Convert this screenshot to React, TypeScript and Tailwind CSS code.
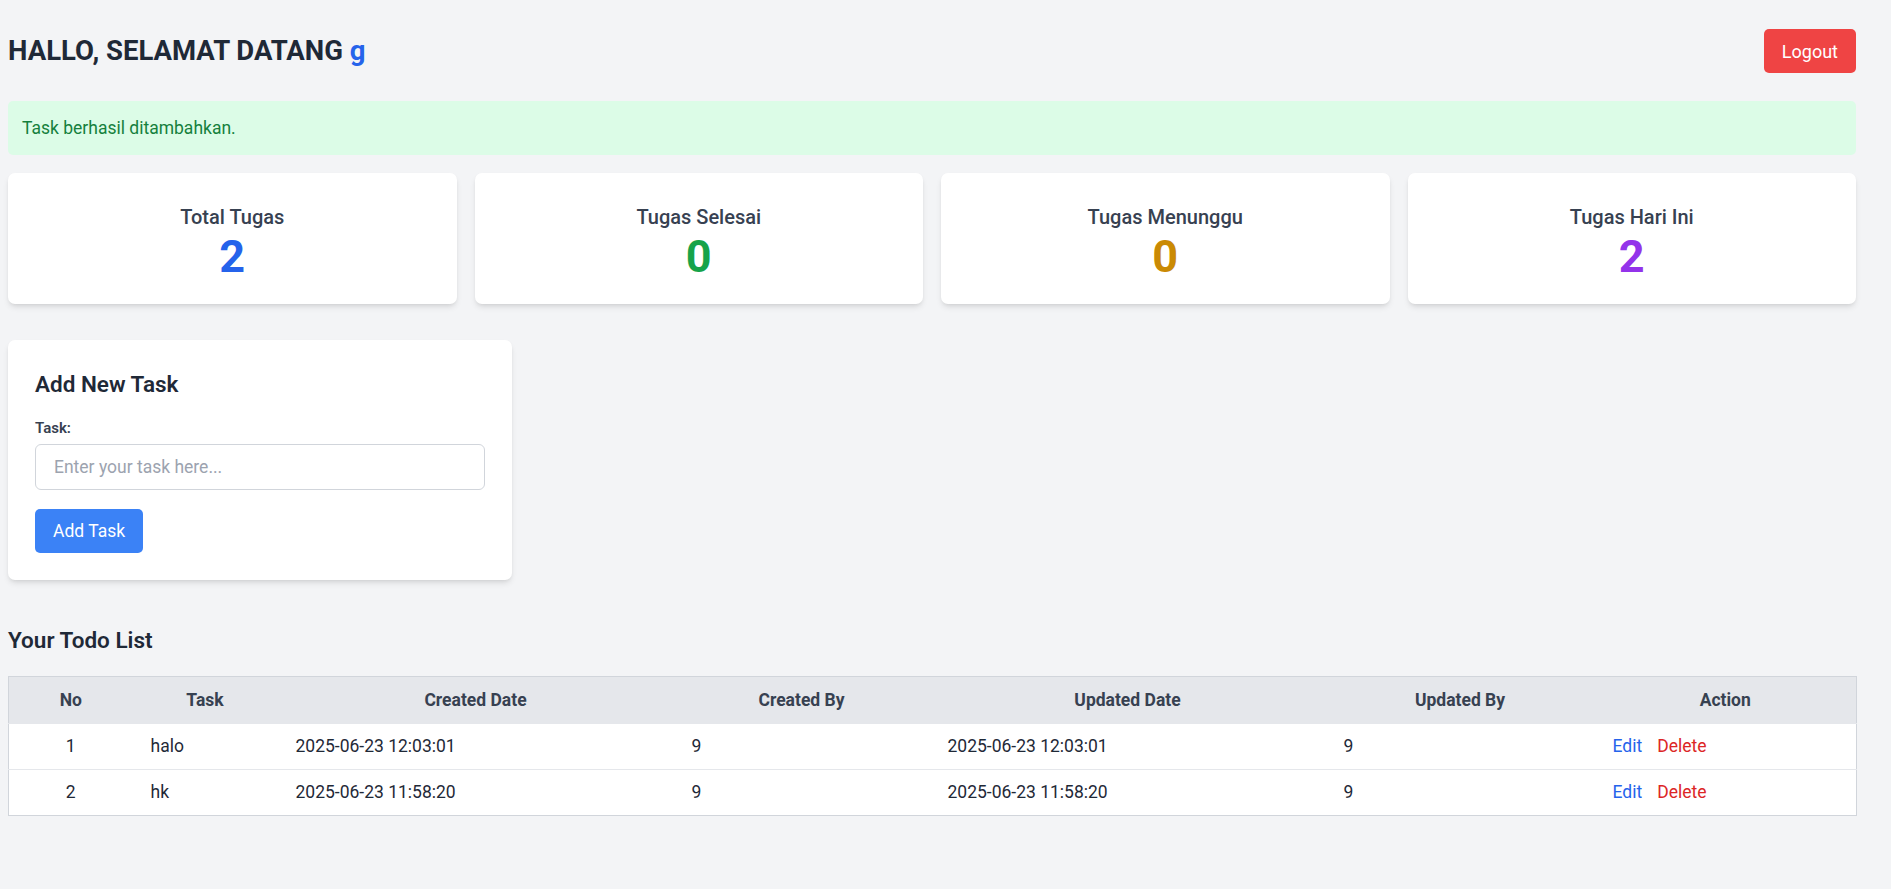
const stats = [
  { label: "Total Tugas", value: 2, color: "text-[#2563eb]" },
  { label: "Tugas Selesai", value: 0, color: "text-[#16a34a]" },
  { label: "Tugas Menunggu", value: 0, color: "text-[#ca8a04]" },
  { label: "Tugas Hari Ini", value: 2, color: "text-[#9333ea]" },
];

const todos = [
  { no: 1, task: "halo", created: "2025-06-23 12:03:01", createdBy: 9, updated: "2025-06-23 12:03:01", updatedBy: 9 },
  { no: 2, task: "hk", created: "2025-06-23 11:58:20", createdBy: 9, updated: "2025-06-23 11:58:20", updatedBy: 9 },
];

const headers = ["No", "Task", "Created Date", "Created By", "Updated Date", "Updated By", "Action"];
const colWidths = ["w-[124px]", "w-[145px]", "w-[396px]", "w-[256px]", "w-[396px]", "w-[269px]", "w-[262px]"];

export default function App() {
  return (
    <div className="min-h-screen bg-[#f3f4f6] pb-10 pl-[8px] pt-[29px] font-['Roboto',sans-serif] text-[#1f2937]">
      <div className="w-[1848px]">
        {/* header */}
        <div className="flex items-center justify-between">
          <h1 className="text-[27.5px] font-bold leading-[40px] text-[#1f2937]">
            HALLO, SELAMAT DATANG <span className="text-[#2563eb]">g</span>
          </h1>
          <button className="h-[44px] rounded-[5px] bg-[#ef4444] px-[18px] text-[18px] text-white">Logout</button>
        </div>

        {/* flash message */}
        <div className="mt-[28px] rounded-[5px] bg-[#dcfce7] px-[14px] py-[14.5px] text-[17.5px] leading-[25px] text-[#15803d]">
          Task berhasil ditambahkan.
        </div>

        {/* stats */}
        <div className="mt-[18px] grid grid-cols-4 gap-[18px]">
          {stats.map((s) => (
            <div
              key={s.label}
              className="flex h-[131px] flex-col items-center justify-center rounded-[7px] bg-white pt-[6px] shadow-md"
            >
              <p className="text-[20px] font-medium leading-[30px] text-[#374151]">{s.label}</p>
              <p className={`text-[45px] font-bold leading-[50px] ${s.color}`}>{s.value}</p>
            </div>
          ))}
        </div>

        {/* add task */}
        <div className="mt-[36px] w-[504px] rounded-[7px] bg-white p-[27px] shadow-md">
          <h2 className="text-[22.5px] font-semibold leading-[35px] text-[#1f2937]">Add New Task</h2>
          <form className="mt-[16px]" onSubmit={(e) => e.preventDefault()}>
            <label className="mb-[6px] block text-[15px] font-semibold leading-[20px] text-[#374151]">Task:</label>
            <input
              type="text"
              placeholder="Enter your task here..."
              className="block h-[46px] w-full rounded-[6px] border border-[#d1d5db] px-[18px] text-[17.5px] outline-none placeholder:text-[#9ca3af]"
            />
            <button type="submit" className="mt-[19px] h-[44px] rounded-[5px] bg-[#3b82f6] px-[18px] text-[17.5px] text-white">
              Add Task
            </button>
          </form>
        </div>

        {/* todo list */}
        <h2 className="mt-[43px] text-[22.5px] font-semibold leading-[35px] text-[#1f2937]">Your Todo List</h2>
        <table className="mt-[18px] w-[1848px] table-fixed border-collapse border border-[#d1d5db] bg-white text-[17.5px] leading-[25px]">
          <colgroup>
            {colWidths.map((w, i) => (
              <col key={i} className={w} />
            ))}
          </colgroup>
          <thead>
            <tr className="bg-[#e5e7eb]">
              {headers.map((h) => (
                <th key={h} className="px-[18px] py-[10.5px] text-center font-bold text-[#374151]">
                  {h}
                </th>
              ))}
            </tr>
          </thead>
          <tbody>
            {todos.map((t) => (
              <tr key={t.no} className="border-t border-[#e5e7eb]">
                <td className="px-[18px] py-[10px] text-center">{t.no}</td>
                <td className="px-[18px] py-[10px]">{t.task}</td>
                <td className="px-[18px] py-[10px]">{t.created}</td>
                <td className="px-[18px] py-[10px]">{t.createdBy}</td>
                <td className="px-[18px] py-[10px]">{t.updated}</td>
                <td className="px-[18px] py-[10px]">{t.updatedBy}</td>
                <td className="px-[18px] py-[10px]">
                  <a href="#" className="text-[#2563eb]">Edit</a>
                  <a href="#" className="ml-[15px] text-[#dc2626]">Delete</a>
                </td>
              </tr>
            ))}
          </tbody>
        </table>
      </div>
    </div>
  );
}
